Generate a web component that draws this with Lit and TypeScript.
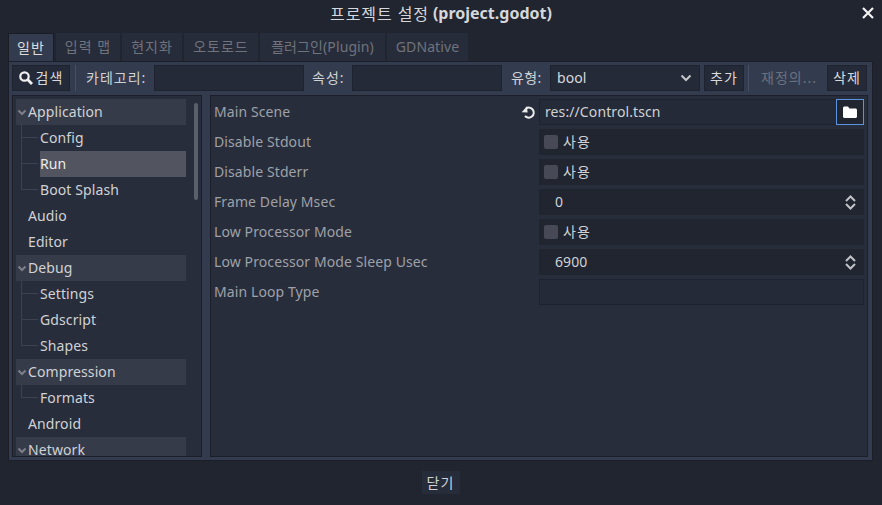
import { LitElement, html, css, svg } from "lit";
import { customElement } from "lit/decorators.js";

const tree: [string, number, string?][] = [
  ["Application", 0, "h"], ["Config", 1, "m"], ["Run", 1, "s"], ["Boot Splash", 1, "l"],
  ["Audio", 0], ["Editor", 0],
  ["Debug", 0, "h"], ["Settings", 1, "m"], ["Gdscript", 1, "m"], ["Shapes", 1, "l"],
  ["Compression", 0, "h"], ["Formats", 1, "l"], ["Android", 0], ["Network", 0, "h"],
];

const spin = svg`<svg width="11" height="15" viewBox="0 0 11 15"><path d="M1 6 5.5 1.5 10 6M1 9l4.5 4.5L10 9" fill="none" stroke="#c0c2c7" stroke-width="2"/></svg>`;

@customElement("app-root")
export class AppRoot extends LitElement {
  static styles = css`
    :host { display: block; width: 882px; height: 505px; overflow: hidden; background: #212530; color: #e0e0e0;
      font: 14px "Noto Sans", "Noto Sans CJK KR", sans-serif; letter-spacing: .1px; }
    .t { display: block; margin-top: -2px; white-space: nowrap; }
    .k { letter-spacing: 1px; }
    .win { height: 505px; display: flex; flex-direction: column; padding: 0 9px 0 8px; box-sizing: border-box; }
    .title { height: 33px; flex: none; display: flex; align-items: center; justify-content: center; position: relative; padding-bottom: 7px; box-sizing: border-box; margin-left: 1px; font-size: 16px; color: #d6d7da; letter-spacing: 0; }
    .title .k { letter-spacing: .9px; }
    .title b { font-weight: 700; margin-left: 4px; }
    .close { position: absolute; right: -1px; top: 7px; }
    .tabs { display: flex; height: 28px; flex: none; gap: 2px; }
    .tab { box-sizing: border-box; height: 28px; display: flex; align-items: center; justify-content: center; background: #272c3a; color: #6f737c; }
    .tab.on { background: #333c4f; color: #dcdcdc; border-top: 1px solid #1a1d26; border-left: 1px solid #1a1d26; border-right: 1px solid #1a1d26; }
    .panel { height: 400px; flex: none; box-sizing: border-box; background: #333c4f; border: 1px solid #1c1f29; padding: 3px 4px 3px 3px; display: flex; flex-direction: column; gap: 4px; }
    .bar { display: flex; height: 26px; flex: none; align-items: stretch; }
    .btn { box-sizing: border-box; background: #252a38; border: 1px solid #1f2330; display: flex; align-items: center; justify-content: center; color: #d8d9dc; flex: none; }
    .search { width: 58px; gap: 3px; }
    .sep { width: 1px; background: #475066; flex: none; margin: 0 10px 0 5px; }
    .lbl { display: flex; align-items: center; flex: none; color: #cfd1d5; box-sizing: border-box; }
    .w68 { width: 68px; }
    .w48a { width: 48px; padding-left: 8px; }
    .w48b { width: 48px; padding-left: 9px; }
    .w48b .k { letter-spacing: .4px; }
    .inp { box-sizing: border-box; width: 150px; flex: none; background: #252a38; border: 1px solid #1f2330; }
    .sel { display: flex; align-items: center; justify-content: space-between; padding: 0 7px 0 6px; color: #d8d9dc; }
    .w40 { width: 40px; margin-left: 4px; }
    .sep2 { margin: 0 4px; }
    .dis { color: #6a7180; width: 70px; flex: none; display: flex; align-items: center; justify-content: center; padding-left: 2px; box-sizing: border-box; }
    .main { flex: 1; display: flex; gap: 8px; min-height: 0; }
    .tree { width: 190px; flex: none; box-sizing: border-box; background: #282d3b; border: 1px solid #1c1f29; padding: 3px 15px 0 3px; position: relative; overflow: hidden; }
    .row { height: 26px; display: flex; align-items: center; position: relative; color: #d0d2d5; }
    .row.d0 { padding-left: 12px; }
    .row.d1 { padding-left: 24px; }
    .row.h { background: #363b49; }
    .txt { height: 100%; display: flex; align-items: center; flex: 1; }
    .row.s .txt { background: #52555f; color: #ececec; }
    .chev { position: absolute; left: 1px; top: 10px; }
    .guide { position: absolute; left: 5px; top: -1px; width: 17px; height: 14px; border-left: 1px solid #3c4252; border-bottom: 1px solid #3c4252; box-sizing: border-box; }
    .guide.m::after { content: ""; position: absolute; left: -1px; top: 13px; height: 14px; border-left: 1px solid #3c4252; }
    .thumb { position: absolute; left: 181px; top: 7px; width: 4px; height: 97px; background: #5b5f6b; border-radius: 2px; }
    .props { flex: 1; box-sizing: border-box; background: #282d3b; border: 1px solid #1c1f29; padding: 3px 3px 0 3px; display: flex; flex-direction: column; gap: 4px; }
    .prop { height: 26px; display: flex; align-items: stretch; flex: none; }
    .name { width: 325px; flex: none; display: flex; align-items: center; justify-content: space-between; color: #9ea1a8; padding-right: 3px; box-sizing: border-box; }
    .val { flex: 1; box-sizing: border-box; background: #212530; display: flex; align-items: center; color: #d0d2d5; }
    .val.check { padding-left: 5px; gap: 5px; }
    .box { width: 14px; height: 14px; background: #474a56; border-radius: 2px; flex: none; }
    .val.num { padding: 0 8px 0 16px; justify-content: space-between; }
    .val.empty { background: #252a38; border: 1px solid #1f2330; }
    .val.path { background: #252a38; padding-left: 5px; border: 1px solid #1f2330; border-right: 0; justify-content: space-between; padding-right: 0; align-items: stretch; }
    .ptxt { display: flex; align-items: center; }
    .pick { width: 28px; box-sizing: border-box; border: 1px solid #5a93e0; background: #212530; display: flex; align-items: center; justify-content: center; margin: -1px 0; }
    .foot { flex: 1; display: flex; align-items: center; justify-content: center; padding: 0 0 1px 0; }
    .ok { background: #272c3a; color: #d0d2d5; width: 38px; height: 23px; display: flex; align-items: center; justify-content: center; }
  `;
  render() {
    const tabs: [string, number, boolean][] = [["일반", 46, true], ["입력 맵", 64, true], ["현지화", 60, true], ["오토로드", 74, true], ["플러그인(Plugin)", 125, false], ["GDNative", 81, false]];
    const check = html`<div class="val check"><div class="box"></div><span class="t k">사용</span></div>`;
    return html`<div class="win">
      <div class="title"><span class="k">프로젝트 설정</span><b>(project.godot)</b>
        <svg class="close" width="12" height="12" viewBox="0 0 12 12"><path d="M1 1l10 10M11 1 1 11" stroke="#f2f2f2" stroke-width="2.2" fill="none"/></svg>
      </div>
      <div class="tabs">${tabs.map(([t, w, k], i) => html`<div class="tab ${i === 0 ? "on" : ""}" style="width:${w}px"><span class="t ${k ? "k" : ""}">${t}</span></div>`)}</div>
      <div class="panel">
        <div class="bar">
          <div class="btn search"><svg width="14" height="14" viewBox="0 0 14 14"><circle cx="5.5" cy="5.5" r="4.2" fill="none" stroke="#f0f0f0" stroke-width="2.2"/><path d="M8.6 8.6l4.4 4.4" stroke="#f0f0f0" stroke-width="2.8"/></svg><span class="t k">검색</span></div>
          <div class="sep"></div>
          <div class="lbl w68"><span class="t k">카테고리:</span></div>
          <div class="inp"></div>
          <div class="lbl w48a"><span class="t k">속성:</span></div>
          <div class="inp"></div>
          <div class="lbl w48b"><span class="t k">유형:</span></div>
          <div class="inp sel"><span class="t">bool</span><svg width="12" height="8" viewBox="0 0 12 8"><path d="M1.5 1.5 6 6l4.5-4.5" fill="none" stroke="#c4c6ca" stroke-width="2"/></svg></div>
          <div class="btn w40"><span class="t k">추가</span></div>
          <div class="sep sep2"></div>
          <div class="dis"><span class="t k">재정의...</span></div>
          <div class="btn w40"><span class="t k">삭제</span></div>
        </div>
        <div class="main">
          <div class="tree">
            ${tree.map(([t, d, k]) => html`<div class="row d${d} ${k === "h" ? "h" : ""} ${k === "s" ? "s" : ""}">
              ${k === "h" ? html`<svg class="chev" width="10" height="7" viewBox="0 0 10 7"><path d="M1.5 1.5 5 5l3.5-3.5" fill="none" stroke="#7d808a" stroke-width="2"/></svg>` : ""}
              ${d === 1 ? html`<div class="guide ${k === "l" ? "" : "m"}"></div>` : ""}
              <span class="txt"><span class="t">${t}</span></span></div>`)}
            <div class="thumb"></div>
          </div>
          <div class="props">
            <div class="prop"><div class="name"><span class="t">Main Scene</span><svg width="15" height="15" viewBox="0 0 15 15"><path d="M5 3.4A5 5 0 1 1 4 11" fill="none" stroke="#ececec" stroke-width="2.1"/><path d="M0.6 7.2 6.6 7.4 6 1.2Z" fill="#ececec"/></svg></div>
              <div class="val path"><span class="ptxt"><span class="t">res://Control.tscn</span></span><div class="pick"><svg width="14" height="12" viewBox="0 0 14 12"><path d="M0 1.5 1 .5h4l1.5 2H13l1 1V11l-1 1H1l-1-1Z" fill="#fff"/></svg></div></div></div>
            <div class="prop"><div class="name"><span class="t">Disable Stdout</span></div>${check}</div>
            <div class="prop"><div class="name"><span class="t">Disable Stderr</span></div>${check}</div>
            <div class="prop"><div class="name"><span class="t">Frame Delay Msec</span></div><div class="val num"><span class="t">0</span>${spin}</div></div>
            <div class="prop"><div class="name"><span class="t">Low Processor Mode</span></div>${check}</div>
            <div class="prop"><div class="name"><span class="t">Low Processor Mode Sleep Usec</span></div><div class="val num"><span class="t">6900</span>${spin}</div></div>
            <div class="prop"><div class="name"><span class="t">Main Loop Type</span></div><div class="val empty"></div></div>
          </div>
        </div>
      </div>
      <div class="foot"><div class="ok"><span class="t k">닫기</span></div></div>
    </div>`;
  }
}
